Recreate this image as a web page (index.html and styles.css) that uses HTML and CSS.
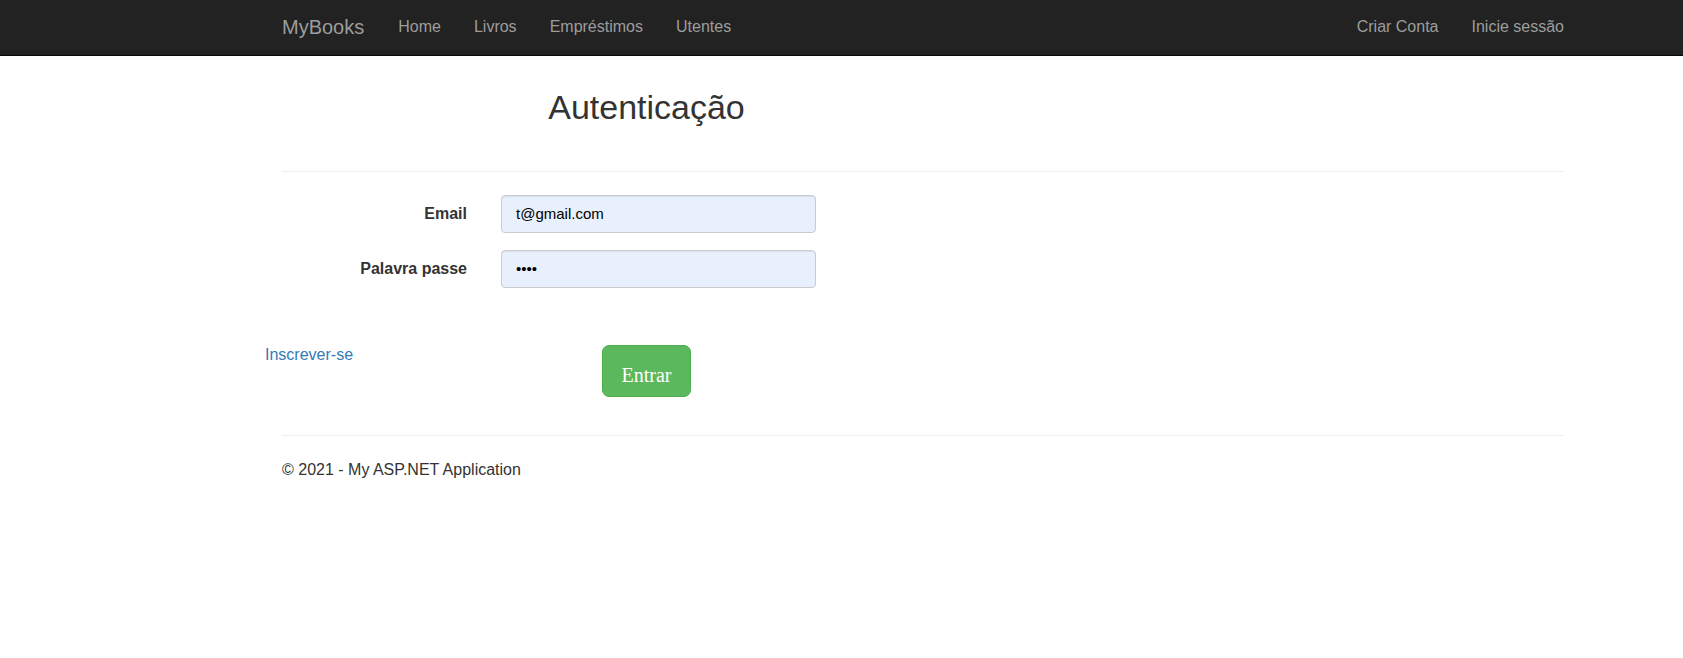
FILE: index.html
```html
<!DOCTYPE html>
<html lang="pt">
<head>
<meta charset="utf-8">
<meta name="viewport" content="width=device-width, initial-scale=1">
<title>Autenticação - MyBooks</title>
<link rel="stylesheet" href="styles.css">
</head>
<body>
<header class="navbar">
  <nav class="nav page">
    <a class="brand" href="#">MyBooks</a>
    <a href="#">Home</a>
    <a href="#">Livros</a>
    <a href="#">Empréstimos</a>
    <a href="#">Utentes</a>
    <a class="push" href="#">Criar Conta</a>
    <a href="#">Inicie sessão</a>
  </nav>
</header>
<main class="page">
  <h2 class="title">Autenticação</h2>
  <hr class="rule">
  <form class="login">
    <div class="field">
      <label for="email">Email</label>
      <input id="email" type="email" value="t@gmail.com">
    </div>
    <div class="field">
      <label for="password">Palavra passe</label>
      <input id="password" type="password" value="1234">
    </div>
    <div class="actions">
      <a class="signup" href="#">Inscrever-se</a>
      <button class="submit" type="submit">Entrar</button>
    </div>
  </form>
  <hr class="rule">
  <footer class="footer">© 2021 - My ASP.NET Application</footer>
</main>
</body>
</html>
```
FILE: styles.css
```css
* {
  box-sizing: border-box;
}

body {
  margin: 0;
  background: #fff;
  color: #333;
  font: 16px/24px "Liberation Sans", Arial, sans-serif;
}

a {
  color: #337ab7;
  text-decoration: none;
}

.page {
  padding: 0 119px 0 282px;
}

.navbar {
  background: #222;
  border-bottom: 1px solid #080808;
}

.nav {
  display: flex;
  align-items: center;
  gap: 33px;
  padding-top: 15px;
  padding-bottom: 16px;
}

.nav a {
  color: #9d9d9d;
}

.nav .brand {
  margin-right: 1px;
  font-size: 20px;
}

.nav .push {
  margin-left: auto;
}

.title {
  max-width: 763px;
  margin: 32px 0 44px -17px;
  font-size: 34px;
  font-weight: 400;
  line-height: 39px;
  text-align: center;
}

.rule {
  margin: 0;
  border: 0;
  border-top: 1px solid #eee;
}

.login {
  max-width: 763px;
  margin: 23px 0 38px -17px;
}

.field {
  display: grid;
  grid-template-columns: 202px minmax(0, 315px);
  column-gap: 34px;
  margin-bottom: 17px;
}

.field label {
  padding-top: 7px;
  font-weight: 700;
  text-align: right;
}

.field input {
  width: 100%;
  height: 38px;
  padding: 6px 14px 8px;
  border: 1px solid #ccc;
  border-radius: 4px;
  background: #e8f0fe;
  box-shadow: inset 0 1px 1px rgba(0, 0, 0, 0.075);
  color: #000;
  font: 15px/22px "Liberation Sans", Arial, sans-serif;
}

.actions {
  display: grid;
  grid-template-columns: 1fr auto 1fr;
  align-items: start;
  padding-top: 40px;
}

.signup {
  line-height: 20px;
}

.submit {
  height: 52px;
  padding: 18px 19px 10px;
  border: 1px solid #4cae4c;
  border-radius: 7px;
  background: #5cb85c;
  color: #fff;
  font: 20px/22px "Liberation Serif", "Times New Roman", serif;
}

.footer {
  padding: 22px 0;
}
```
